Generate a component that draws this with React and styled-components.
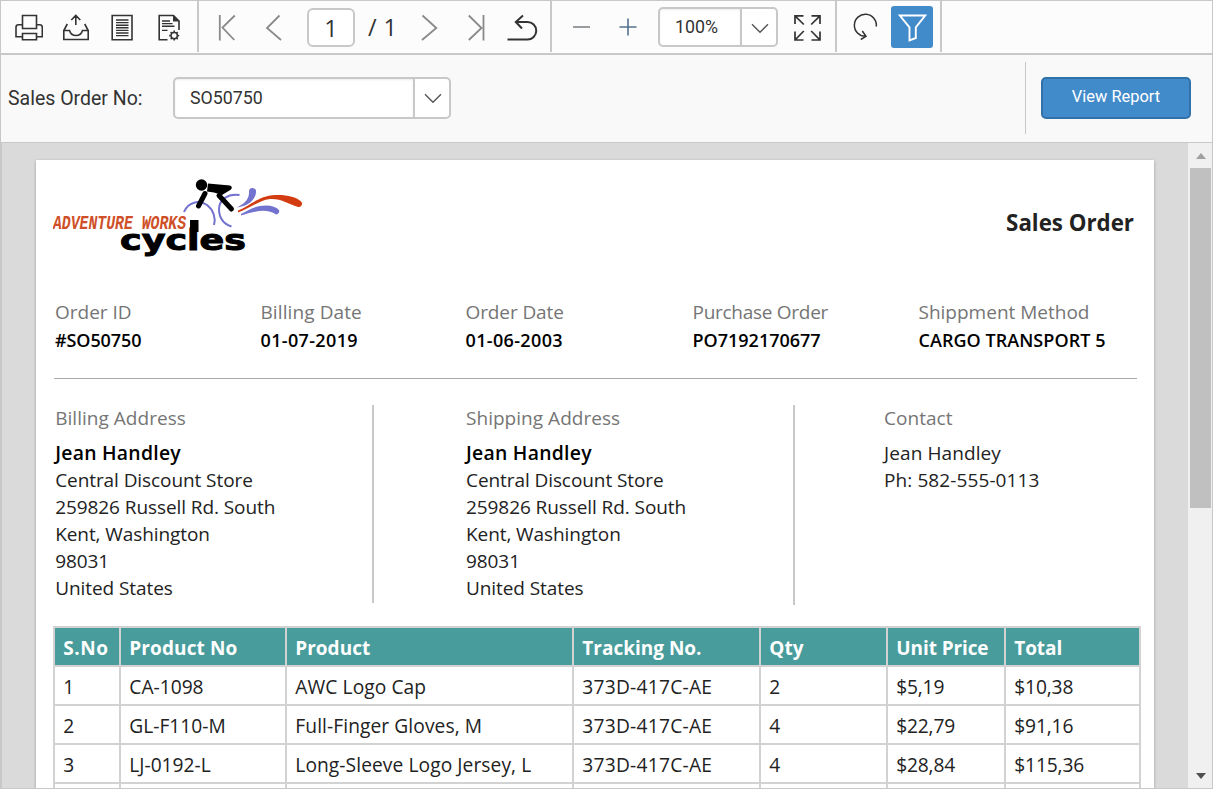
import React from "react";
import styled, { createGlobalStyle, css } from "styled-components";

const Global = createGlobalStyle`
  *, *::before, *::after { box-sizing: border-box; }
  body { margin: 0; overflow: hidden; }
`;

const ui = `Roboto, "Liberation Sans", sans-serif`;
const doc = `"Open Sans", "Noto Sans", sans-serif`;
const line = "#c8c8c8";

const Viewer = styled.main`
  display: flex;
  flex-direction: column;
  width: 1213px;
  height: 789px;
  border: 1px solid ${line};
  background: #f9f9f9;
  font-family: ${ui};
  color: #333;
`;

/* ---------- toolbar ---------- */
const Toolbar = styled.header`
  display: flex;
  flex: none;
  height: 54px;
  background: #fcfcfc;
  border-bottom: 2px solid ${line};
`;

const ToolGroup = styled.div`
  display: flex;
  align-items: center;
  flex: none;
  width: ${(p) => p.$width}px;
  height: 51px;
  padding-top: 1px;
  border-right: 2px solid ${line};
`;

const ToolButton = styled.button`
  display: flex;
  align-items: center;
  justify-content: center;
  flex: none;
  height: 42px;
  margin: 0 0 0 ${(p) => p.$gap}px;
  padding: 0;
  border: 0;
  background: none;
  ${(p) =>
    p.$active &&
    css`
      width: 42px;
      border-radius: 3px;
      background: #428bca;
    `}
`;

const Glyph = styled.svg`
  display: block;
  fill: none;
  stroke: ${(p) => p.$color || "#333"};
  stroke-width: ${(p) => p.$weight || 1.6};
`;

const PageInput = styled.div`
  flex: none;
  width: 48px;
  height: 39px;
  margin-left: 23px;
  border: 2px solid ${line};
  border-radius: 6px;
  background: #fff;
  font: 400 23.5px/36px ${doc};
  text-align: center;
`;

const PageTotal = styled.span`
  width: 30px;
  margin-left: 13px;
  font: 400 23.5px/36px ${doc};
  letter-spacing: 0.4px;
  white-space: pre;
`;

const Combo = styled.div`
  display: flex;
  flex: none;
  width: ${(p) => p.$width}px;
  height: ${(p) => p.$height}px;
  margin-left: ${(p) => p.$gap}px;
  border: 2px solid ${line};
  border-radius: 5px;
  background: #fff;
  overflow: hidden;
`;

const ComboValue = styled.span`
  flex: 1;
  padding-left: ${(p) => p.$inset}px;
  font-size: 17.8px;
  line-height: ${(p) => p.$line}px;
  box-shadow: inset 0 1px 2px rgba(0, 0, 0, 0.08);
`;

const ComboArrow = styled.span`
  display: flex;
  align-items: center;
  justify-content: center;
  width: 36px;
  padding: 2px 0 0 1px;
  border-left: 2px solid ${line};
`;

/* ---------- parameters ---------- */
const Params = styled.section`
  display: flex;
  align-items: center;
  flex: none;
  height: 88px;
  padding-bottom: 2px;
  border-bottom: 1px solid ${line};
`;

const ParamLabel = styled.label`
  width: 165px;
  padding: 2px 0 0 7px;
  font-size: 19.5px;
  line-height: 24px;
`;

const ParamActions = styled.div`
  display: flex;
  align-items: center;
  width: 187px;
  height: 72px;
  margin-left: auto;
  padding-left: 15px;
  border-left: 1px solid ${line};
`;

const ViewButton = styled.button`
  width: 150px;
  height: 42px;
  padding: 0 0 2px;
  border: 2px solid #3071a9;
  border-radius: 5px;
  background: #428bca;
  color: #fff;
  font: 400 16.45px/20px ${ui};
`;

/* ---------- report area ---------- */
const Body = styled.div`
  display: flex;
  flex: 1;
  min-height: 0;
  background: #dadada;
  border-left: 1px solid ${line};
`;

const Canvas = styled.div`
  flex: 1;
  padding: 17px 0 0 34px;
  overflow: hidden;
`;

const Paper = styled.article`
  width: 1118px;
  height: 1200px;
  padding-left: 17px;
  background: #fff;
  box-shadow: 0 1px 3px rgba(0, 0, 0, 0.28);
  font-family: ${doc};
  color: #222;
`;

const ReportHead = styled.div`
  display: flex;
  justify-content: space-between;
  height: 138px;
  padding: 16px 20px 0 0;
`;

const Title = styled.h1`
  margin: 0;
  padding-top: 31px;
  font-size: 22.3px;
  line-height: 32px;
  font-weight: 700;
`;

const Facts = styled.dl`
  display: grid;
  grid-template-columns: 205.5px 205px 227px 226px auto;
  width: 1083px;
  height: 81px;
  margin: 0 0 0 1px;
  padding-left: 1px;
  border-bottom: 1px solid #a9a9a9;
`;

const Fact = styled.div`
  display: flex;
  flex-direction: column;
`;

const Caption = styled.dt`
  color: #757575;
  font-size: 19px;
  line-height: 28px;
  letter-spacing: ${(p) => p.$track || 0}px;
`;

const FactValue = styled.dd`
  margin: 0;
  color: #000;
  font-size: 18px;
  line-height: 29px;
  font-weight: 600;
  letter-spacing: ${(p) => p.$track || 0}px;
`;

const Parties = styled.div`
  display: grid;
  grid-template-columns: 320px 421px auto;
  align-items: start;
  margin: 26px 0 0 1px;
`;

const Party = styled.address`
  min-height: ${(p) => p.$height}px;
  padding-left: ${(p) => p.$inset}px;
  border-right: ${(p) => (p.$last ? "0" : `2px solid ${line}`)};
  font-style: normal;
  font-size: 19px;
  line-height: 27px;
`;

const PartyCaption = styled.div`
  margin-bottom: 8px;
  color: #757575;
  letter-spacing: 0.03px;
`;

const PartyName = styled.div`
  height: 27px;
  color: #000;
  font-size: 19.4px;
  line-height: 26px;
  font-weight: 600;
  letter-spacing: 0.25px;
`;

const PartyLine = styled.div`
  letter-spacing: ${(p) => p.$track || -0.08}px;
`;

const Table = styled.div`
  width: 1088px;
  margin-top: 21px;
  border: solid #d2d2d2;
  border-width: 2px 0 0 2px;
`;

const Row = styled.div`
  display: grid;
  grid-template-columns: 66px 166px 287px 187px 127px 118px 135px;
  height: 39px;
  font-size: 19.2px;
  line-height: 37px;
  color: #222;
  ${(p) =>
    p.$head &&
    css`
      background: #489c9b;
      color: #fff;
      font-size: 19px;
      line-height: 39px;
      font-weight: 700;
    `}
`;

const Cell = styled.div`
  height: 39px;
  padding: 1px 0 0 8.3px;
  border: solid #d2d2d2;
  border-width: 0 2px 2px 0;
  letter-spacing: ${(p) => p.$track || 0}px;
  white-space: nowrap;
`;

/* ---------- scroll bar ---------- */
const ScrollTrack = styled.div`
  display: flex;
  flex-direction: column;
  align-items: center;
  width: 24px;
  padding: 10px 0 9px 1px;
  background: #f0f0f0;
`;

const ScrollThumb = styled.div`
  width: 21px;
  height: 340px;
  margin: 9px 0 auto;
  background: #c0c0c0;
`;

const Caret = styled.i`
  border: solid transparent;
  border-width: 0 5.5px;
  ${(p) => (p.$up ? "border-bottom: 6px solid #a0a0a0;" : "border-top: 6px solid #505050;")}
`;

/* Toolbar glyphs share one 32px tall strip, each starting at its own x. */
function Icon({ x, w, children, ...rest }) {
  return (
    <Glyph width={w} height={32} viewBox={`${x} 11 ${w} 32`} {...rest}>
      {children}
    </Glyph>
  );
}

const gray = "#8a8a8a";

function Chevron() {
  return (
    <Glyph width="18" height="11" viewBox="0 0 18 11" $color="#555" $weight={1.4}>
      <path d="M1 1.2 9 9.2 17 1.2" />
    </Glyph>
  );
}

function Logo() {
  return (
    <svg width="254" height="84" viewBox="53 176 254 84">
      <g fill="none" stroke="#7272cf" strokeWidth="2">
        <path d="M184 212C188 202 199 199.500 207 205C213.500 210 216 218 214 225" />
        <path d="M239.500 195C228 193 219 200 219 209C219 218 224 224 231.500 226.500" />
      </g>
      <g fill="#7272cf">
        <path d="M237 207.500C246 203 249.500 198 249 191A3.600 3.600 0 0 1 256 190.500C256.500 200 248 206 237 207.500Z" />
        <path d="M241 214C250 209 256 205.500 266 205.500C272 205.500 276 207 279 210A3.300 3.300 0 0 1 276 214.500C268 209 258 210 241 215.500Z" />
      </g>
      <path
        fill="#d23c10"
        d="M238 210.500C250 206 258 196 275 195C287 194.500 296 197 300.500 201A3.300 3.300 0 0 1 298 207C288 204 282 198.500 270 199C258 200.500 250 208.500 238 212.500Z"
      />
      <circle cx="201.500" cy="185" r="5.700" />
      <path d="M208 183.500 230 185.500Q233 187 231 189.500L222 195 214 192.500 207 191.500Z" />
      <path d="M205 193.500 198.500 206M219 195.500 231.500 209" stroke="#000" strokeWidth="5" strokeLinecap="round" />
      <text
        x="53"
        y="229"
        textLength="133"
        lengthAdjust="spacingAndGlyphs"
        fill="#cf4f28"
        fontFamily="'Liberation Mono', monospace"
        fontWeight="700"
        fontStyle="italic"
        fontSize="20.500"
      >
        ADVENTURE WORKS
      </text>
      <text
        x="120"
        y="250"
        textLength="126"
        lengthAdjust="spacingAndGlyphs"
        fontFamily="'DejaVu Sans', sans-serif"
        fontWeight="700"
        fontSize="29"
        stroke="#000"
        strokeWidth="1"
      >
        cycles
      </text>
      {/* seat post, running into the wordmark */}
      <rect x="190" y="220" width="8.500" height="12" />
    </svg>
  );
}

const facts = [
  { label: "Order ID", value: "#SO50750", track: -0.1 },
  { label: "Billing Date", value: "01-07-2019", labelTrack: 0.1, track: 0.35 },
  { label: "Order Date", value: "01-06-2003", labelTrack: -0.1, track: 0.35 },
  { label: "Purchase Order", value: "PO7192170677", labelTrack: -0.28 },
  { label: "Shippment Method", value: "CARGO TRANSPORT 5", track: 0.05 },
];

const addressLines = [
  "Central Discount Store",
  "259826 Russell Rd. South",
  "Kent, Washington",
  "98031",
  "United States",
];

const columns = [
  { title: "S.No", headTrack: 0.5 },
  { title: "Product No", headTrack: 0.1 },
  { title: "Product", headTrack: 0, track: 0.08 },
  { title: "Tracking No.", track: 0.24 },
  { title: "Qty" },
  { title: "Unit Price", headTrack: -0.1, track: -0.2 },
  { title: "Total", headTrack: -0.1, track: -0.15 },
];
const orders = [
  ["1", "CA-1098", "AWC Logo Cap", "373D-417C-AE", "2", "$5,19", "$10,38"],
  ["2", "GL-F110-M", "Full-Finger Gloves, M", "373D-417C-AE", "4", "$22,79", "$91,16"],
  ["3", "LJ-0192-L", "Long-Sleeve Logo Jersey, L", "373D-417C-AE", "4", "$28,84", "$115,36"],
  ["", "", "", "", "", "", ""],
];

const gearTeeth = [0, 45, 90, 135, 180, 225, 270, 315];

export default function App() {
  return (
    <Viewer>
      <Global />
      <Toolbar>
        <ToolGroup $width={198}>
          <ToolButton $gap={14} aria-label="Print">
            <Icon x={15} w={28}>
              <path d="M22.500 15.500H36.500V28.500H22.500ZM22.500 24.700H18.500Q16 24.700 16 27.200V36.700H22.500M36.500 24.700H39.800Q42.300 24.700 42.300 27.200V36.700H36.500M22.500 33.500H36.500V39.700H22.500Z" />
            </Icon>
          </ToolButton>
          <ToolButton $gap={19} aria-label="Export">
            <Icon x={62} w={28}>
              <path d="M75.800 15.500V25M71.300 20 75.800 15.500 80.300 20M67.300 24 63.800 30.500V39.500H88.200V30.500L84.700 24M63.800 30.500H69.500C70.500 34 73 35.500 76 35.500S81.500 34 82.500 30.500H88.200" />
            </Icon>
          </ToolButton>
          <ToolButton $gap={18} aria-label="Page layout">
            <Icon x={108} w={28}>
              <path d="M112.200 15.500H132V39.800H112.200Z" />
              <path d="M116 20H128.500M116 22.600H128.500M116 25.200H128.500M116 27.800H128.500M116 30.400H128.500M116 33H128.500M116 35.600H128.500" strokeWidth="1.400" />
            </Icon>
          </ToolButton>
          <ToolButton $gap={19} aria-label="Page setup">
            <Icon x={155} w={28}>
              <path d="M167.500 39.800H159.200V15.500H173.500L179 21V30" />
              <path d="M173 15V21.500H179.500Z" fill="#333" stroke="none" />
              <path d="M162 21H170M162 23.600H172.500M162 26.200H174.500M162 30.400H167.500" strokeWidth="1.400" />
              <circle cx="174.200" cy="35.600" r="3.200" strokeWidth="1.500" />
              {gearTeeth.map((a) => (
                <path key={a} d="M174.200 32.200V30.600" transform={`rotate(${a} 174.200 35.600)`} />
              ))}
            </Icon>
          </ToolButton>
        </ToolGroup>

        <ToolGroup $width={353}>
          <ToolButton $gap={18} aria-label="First page">
            <Icon x={217} w={20} $color={gray} $weight={1.8}>
              <path d="M219.800 15V40.500M234.800 15.500 222.500 27.500 234.300 40" />
            </Icon>
          </ToolButton>
          <ToolButton $gap={27} aria-label="Previous page">
            <Icon x={264} w={20} $color={gray} $weight={1.8}>
              <path d="M279.500 15.500 267 28 281 40" />
            </Icon>
          </ToolButton>
          <PageInput>1</PageInput>
          <PageTotal>/ 1</PageTotal>
          <ToolButton $gap={22} aria-label="Next page">
            <Icon x={420} w={20} $color={gray} $weight={1.8}>
              <path d="M422.500 15.500 436.300 28 422 40" />
            </Icon>
          </ToolButton>
          <ToolButton $gap={26} aria-label="Last page">
            <Icon x={466} w={20} $color={gray} $weight={1.8}>
              <path d="M468.800 15.500 481.500 28 468.800 40M483.500 15V40.500" />
            </Icon>
          </ToolButton>
          <ToolButton $gap={20} aria-label="Back to parent">
            <Icon x={506} w={34} $weight={2}>
              <path d="M523 15.500 515.800 22 522 28.500M515.800 22H527.500A8.700 8.700 0 0 1 527.500 39.500H507.500" />
            </Icon>
          </ToolButton>
        </ToolGroup>

        <ToolGroup $width={285}>
          <ToolButton $gap={19} aria-label="Zoom out">
            <Icon x={571} w={20} $color="#8f9295" $weight={1.8}>
              <path d="M573 27H590" />
            </Icon>
          </ToolButton>
          <ToolButton $gap={27} aria-label="Zoom in">
            <Icon x={618} w={20} $color="#54718c" $weight={1.6}>
              <path d="M619.500 27H636.500M628 18.500V35.500" />
            </Icon>
          </ToolButton>
          <Combo $width={120} $height={40} $gap={20}>
            <ComboValue $inset={15} $line={35}>100%</ComboValue>
            <ComboArrow>
              <Chevron />
            </ComboArrow>
          </Combo>
          <ToolButton $gap={14} aria-label="Fit to page">
            <Icon x={792} w={30} $weight={1.7}>
              <path d="M795 24V15.800H803.500M795 15.800 803.800 24.500M811.500 15.800H820V24M820 15.800 811.200 24.500M795 31.500V40H803.500M795 40 803.800 31M811.500 40H820V31.500M820 40 811.200 31" />
            </Icon>
          </ToolButton>
        </ToolGroup>

        <ToolGroup $width={105}>
          <ToolButton $gap={15} aria-label="Refresh">
            <Icon x={852} w={28} $weight={1.5}>
              <path d="M876.300 26.500A11 11 0 1 0 865.500 36.300M862.300 31 866 36.300 860.800 39.500" />
            </Icon>
          </ToolButton>
          <ToolButton $gap={11} $active aria-label="Parameters">
            <Icon x={897} w={30} $color="#fff" $weight={1.9}>
              <path d="M899.800 15.500H925.200L915.800 27.300V38L909.500 40.300V27.300Z" />
            </Icon>
          </ToolButton>
        </ToolGroup>
      </Toolbar>

      <Params>
        <ParamLabel>Sales Order No:</ParamLabel>
        <Combo $width={278} $height={42} $gap={7}>
          <ComboValue $inset={15} $line={38}>SO50750</ComboValue>
          <ComboArrow>
            <Chevron />
          </ComboArrow>
        </Combo>
        <ParamActions>
          <ViewButton>View Report</ViewButton>
        </ParamActions>
      </Params>

      <Body>
        <Canvas>
          <Paper>
            <ReportHead>
              <Logo />
              <Title>Sales Order</Title>
            </ReportHead>
            <Facts>
              {facts.map((f) => (
                <Fact key={f.label}>
                  <Caption $track={f.labelTrack}>{f.label}</Caption>
                  <FactValue $track={f.track}>{f.value}</FactValue>
                </Fact>
              ))}
            </Facts>
            <Parties>
              <Party $inset={1.2} $height={198}>
                <PartyCaption>Billing Address</PartyCaption>
                <PartyName>Jean Handley</PartyName>
                {addressLines.map((l) => (
                  <PartyLine key={l}>{l}</PartyLine>
                ))}
              </Party>
              <Party $inset={92} $height={200}>
                <PartyCaption>Shipping Address</PartyCaption>
                <PartyName>Jean Handley</PartyName>
                {addressLines.map((l) => (
                  <PartyLine key={l}>{l}</PartyLine>
                ))}
              </Party>
              <Party $inset={89} $last>
                <PartyCaption>Contact</PartyCaption>
                <PartyLine $track={0.1}>Jean Handley</PartyLine>
                <PartyLine $track={0.1}>Ph: 582-555-0113</PartyLine>
              </Party>
            </Parties>
            <Table>
              <Row $head>
                {columns.map((c) => (
                  <Cell key={c.title} $track={c.headTrack}>
                    {c.title}
                  </Cell>
                ))}
              </Row>
              {orders.map((cells, r) => (
                <Row key={r}>
                  {cells.map((text, i) => (
                    <Cell key={i} $track={columns[i].track}>
                      {text}
                    </Cell>
                  ))}
                </Row>
              ))}
            </Table>
          </Paper>
        </Canvas>
        <ScrollTrack>
          <Caret $up />
          <ScrollThumb />
          <Caret />
        </ScrollTrack>
      </Body>
    </Viewer>
  );
}
